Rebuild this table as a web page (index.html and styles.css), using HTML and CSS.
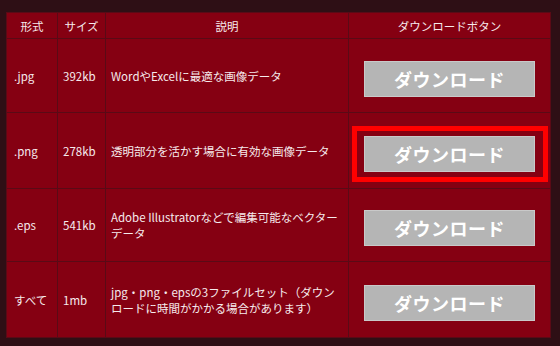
FILE: index.html
```html
<!DOCTYPE html>
<html lang="ja">
<head>
<meta charset="utf-8">
<link rel="stylesheet" href="styles.css">
</head>
<body>
<table class="dl">
  <colgroup>
    <col class="c1">
    <col class="c2">
    <col class="c3">
    <col class="c4">
  </colgroup>
  <thead>
    <tr class="head">
      <th>形式</th>
      <th>サイズ</th>
      <th>説明</th>
      <th>ダウンロードボタン</th>
    </tr>
  </thead>
  <tbody>
    <tr class="r1">
      <td>.jpg</td>
      <td>392kb</td>
      <td>WordやExcelに最適な画像データ</td>
      <td class="btncell"><div class="btn">ダウンロード</div></td>
    </tr>
    <tr class="r2">
      <td>.png</td>
      <td>278kb</td>
      <td>透明部分を活かす場合に有効な画像データ</td>
      <td class="btncell"><div class="btn highlight">ダウンロード</div></td>
    </tr>
    <tr class="r3">
      <td>.eps</td>
      <td>541kb</td>
      <td>Adobe Illustratorなどで編集可能なベクターデータ</td>
      <td class="btncell"><div class="btn">ダウンロード</div></td>
    </tr>
    <tr class="r4">
      <td>すべて</td>
      <td>1mb</td>
      <td>jpg・png・epsの3ファイルセット（ダウンロードに時間がかかる場合があります）</td>
      <td class="btncell"><div class="btn">ダウンロード</div></td>
    </tr>
  </tbody>
</table>
</body>
</html>
```

FILE: styles.css
```css
html, body {
  margin: 0;
  padding: 0;
  background: #2e0f15;
}
body {
  padding: 12px 0 0 6px;
  font-family: "Noto Sans CJK JP", "Noto Sans", sans-serif;
  color: #f6eaec;
}
.dl {
  border-collapse: collapse;
  width: 544px;
  table-layout: fixed;
  background: #850012;
  border: 1px solid #7a1424;
  font-size: 11.5px;
  line-height: 16px;
}
.c1 { width: 51px; }
.c2 { width: 48px; }
.c3 { width: 243px; }
.c4 { width: 202px; }
.dl th, .dl td {
  border: 1px solid #5a0a16;
  padding: 0 5px;
}
.dl th {
  font-weight: normal;
  text-align: center;
  height: 25px;
  padding: 0;
}
.dl td {
  vertical-align: middle;
  text-align: left;
}
.r1 td { height: 73px; }
.r2 td { height: 75px; }
.r3 td { height: 72px; }
.r4 td { height: 75px; }
.dl td:first-child { padding-left: 7px; }
.dl td.btncell {
  padding: 0;
}
.btn {
  position: relative;
  box-sizing: border-box;
  width: 171px;
  height: 36px;
  margin: 6px auto 0;
  background: #b5b5b5;
  border: 1px solid #c9c9c9;
  color: #ffffff;
  font-weight: bold;
  font-size: 18px;
  line-height: 34px;
  text-align: center;
  letter-spacing: 0.5px;
}
.highlight::after {
  content: "";
  position: absolute;
  left: -13px;
  right: -14px;
  top: -11px;
  bottom: -11px;
  border: 5px solid #ff0000;
}
```
